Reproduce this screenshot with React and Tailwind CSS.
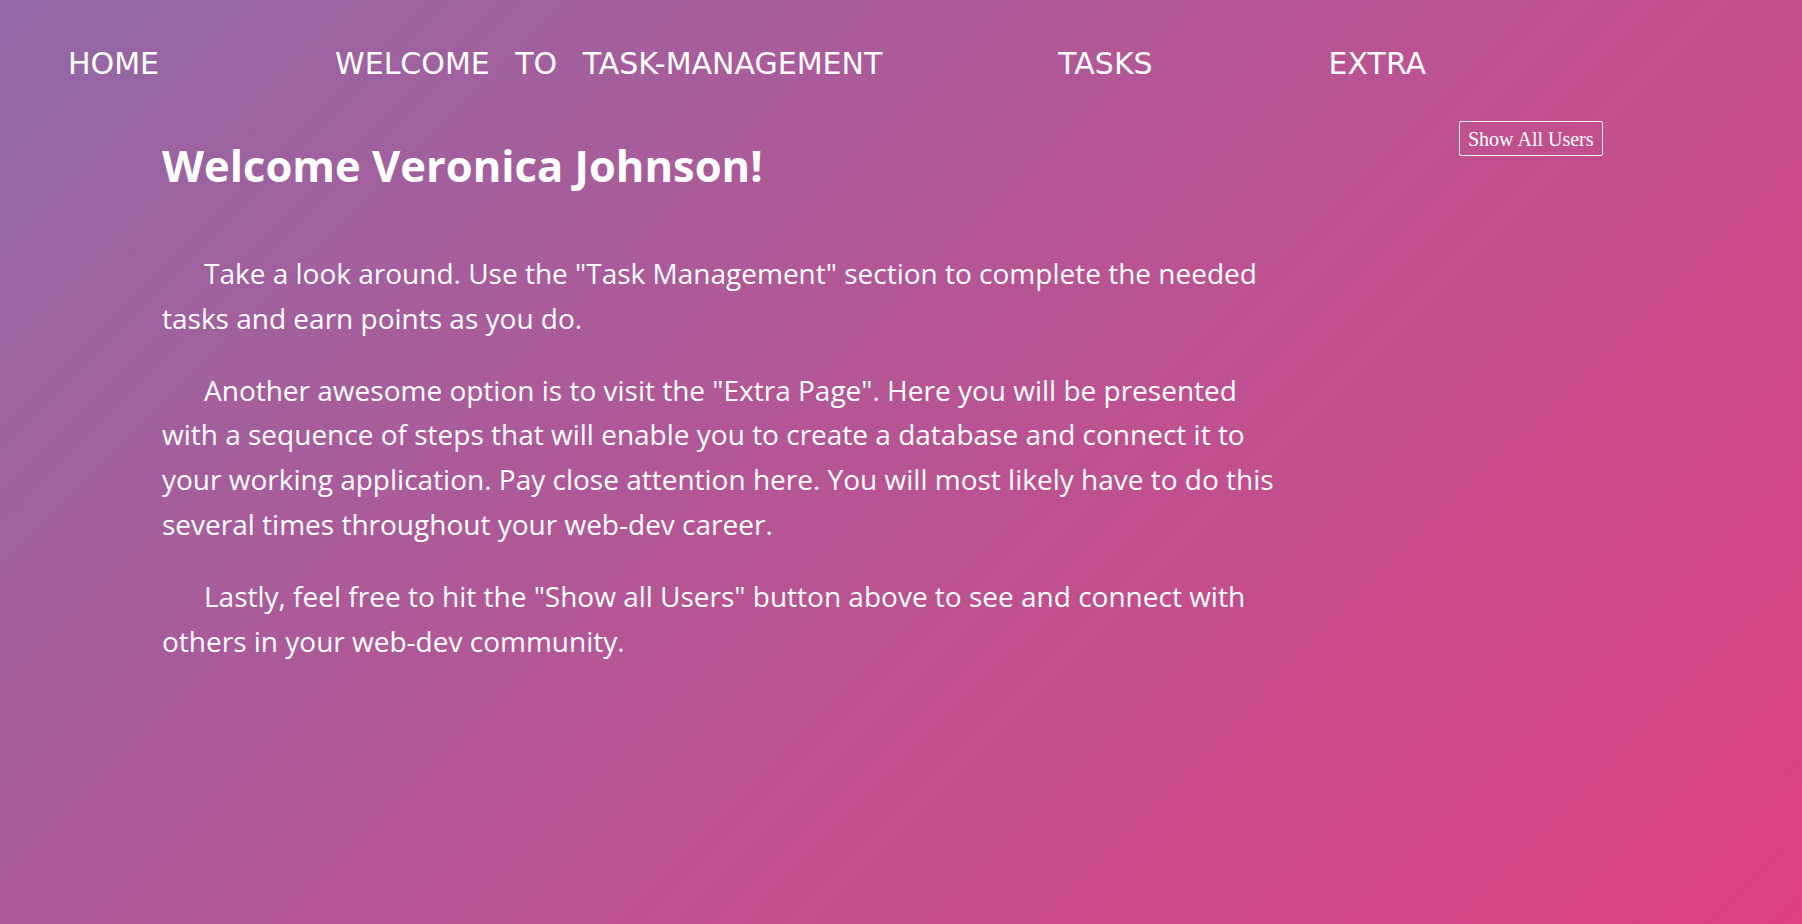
export default function App() {
  return (
    <div className="min-h-[924px] w-full bg-[linear-gradient(135deg,#9268a6_0%,#de4080_100%)] text-white">
      <nav className="flex h-[106px] items-start gap-[176px] pl-[68px] pt-[49px] font-['DejaVu_Sans',sans-serif] text-[30px] leading-[30px]">
        <span>HOME</span>
        <span className="[word-spacing:16px]">WELCOME TO TASK-MANAGEMENT</span>
        <span>TASKS</span>
        <span>EXTRA</span>
      </nav>
      <div className="flex">
        <main className="ml-[162px] w-[1122px] font-['Open_Sans',sans-serif]">
          <h1 className="mt-[30px] text-[43.5px] font-bold leading-[60px]">Welcome Veronica Johnson!</h1>
          <div className="mt-[55px] text-[28px] leading-[44.8px]">
            <p className="indent-[42px]">
              Take a look around. Use the "Task Management" section to complete the needed tasks and earn points as you do.
            </p>
            <p className="mt-[27px] indent-[42px]">
              Another awesome option is to visit the "Extra Page". Here you will be presented with a sequence of steps that will enable you to create a database and connect it to your working application. Pay close attention here. You will most likely have to do this several times throughout your web-dev career.
            </p>
            <p className="mt-[27px] indent-[42px]">
              Lastly, feel free to hit the "Show all Users" button above to see and connect with others in your web-dev community.
            </p>
          </div>
        </main>
        <div className="ml-[175px]">
          <button className="mt-[15px] h-[35px] rounded-[2px] border border-white/90 px-[8px] pt-[1px] font-['Liberation_Serif',serif] text-[20px] leading-[24px] text-white">
            Show All Users
          </button>
        </div>
      </div>
    </div>
  );
}
